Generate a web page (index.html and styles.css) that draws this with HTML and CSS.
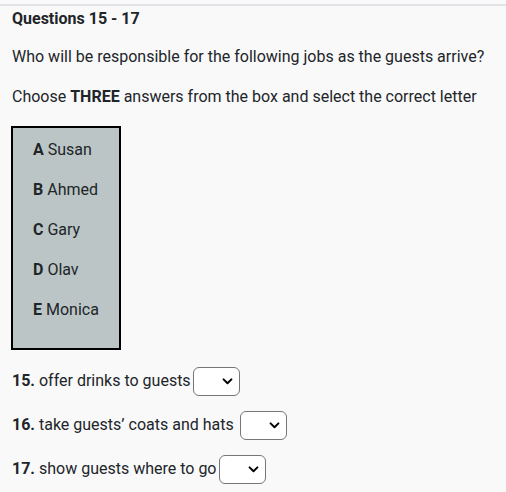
FILE: index.html
```html
<!DOCTYPE html>
<html>
<head>
<meta charset="utf-8">
<link rel="stylesheet" href="styles.css">
</head>
<body>
<div class="page">
  <h4 class="heading">Questions 15 - 17</h4>
  <p class="text">Who will be responsible for the following jobs as the guests arrive?</p>
  <p class="text">Choose <b>THREE</b> answers from the box and select the correct letter</p>
  <div class="box">
    <p class="opt"><b>A</b> Susan</p>
    <p class="opt"><b>B</b> Ahmed</p>
    <p class="opt"><b>C</b> Gary</p>
    <p class="opt"><b>D</b> Olav</p>
    <p class="opt"><b>E</b> Monica</p>
  </div>
  <p class="q"><b>15.</b> offer drinks to guests<select class="sel"><option></option><option>A</option><option>B</option><option>C</option><option>D</option><option>E</option></select></p>
  <p class="q"><b>16.</b> take guests’ coats and hats <select class="sel"><option></option><option>A</option><option>B</option><option>C</option><option>D</option><option>E</option></select></p>
  <p class="q"><b>17.</b> show guests where to go<select class="sel"><option></option><option>A</option><option>B</option><option>C</option><option>D</option><option>E</option></select></p>
</div>
</body>
</html>
```
FILE: styles.css
```css
html, body {
  margin: 0;
  padding: 0;
  background: #f9f9f9;
}
body {
  font-family: Roboto, "Liberation Sans", sans-serif;
  color: #212529;
  font-size: 16px;
  line-height: 24px;
}
.page {
  margin-top: 4px;
  border-top: 2px solid #e1e3e7;
  padding: 1px 12px 0 12px;
}
.heading {
  margin: 0 0 14px 0;
  font-size: 16px;
  font-weight: 700;
  line-height: 24px;
}
.text {
  margin: 0 0 16px 0;
}
.text:nth-of-type(2) {
  margin-bottom: 17px;
}
.box {
  box-sizing: content-box;
  width: 86px;
  margin: 0 0 17px -1px;
  border: 2px solid #000;
  background: #bcc5c6;
  padding: 10px 0 10px 20px;
}
.opt {
  margin: 0 0 16px 0;
}
.q {
  margin: 0 0 16px 0;
  display: flex;
  align-items: center;
  height: 28px;
  white-space: pre;
}
.sel {
  appearance: none;
  -webkit-appearance: none;
  width: 47px;
  height: 29px;
  margin-left: 2px;
  border: 1px solid #767676;
  border-radius: 6px;
  background: #fff url("data:image/svg+xml,%3Csvg xmlns='http://www.w3.org/2000/svg' width='12' height='8' viewBox='0 0 12 8'%3E%3Cpath d='M1.5 1.5 L6 6 L10.5 1.5' fill='none' stroke='%23000' stroke-width='2.2' stroke-linecap='round' stroke-linejoin='round'/%3E%3C/svg%3E") no-repeat right 6px center;
  background-size: 11px 7px;
  font-family: inherit;
  font-size: 16px;
  padding: 0;
}
```
